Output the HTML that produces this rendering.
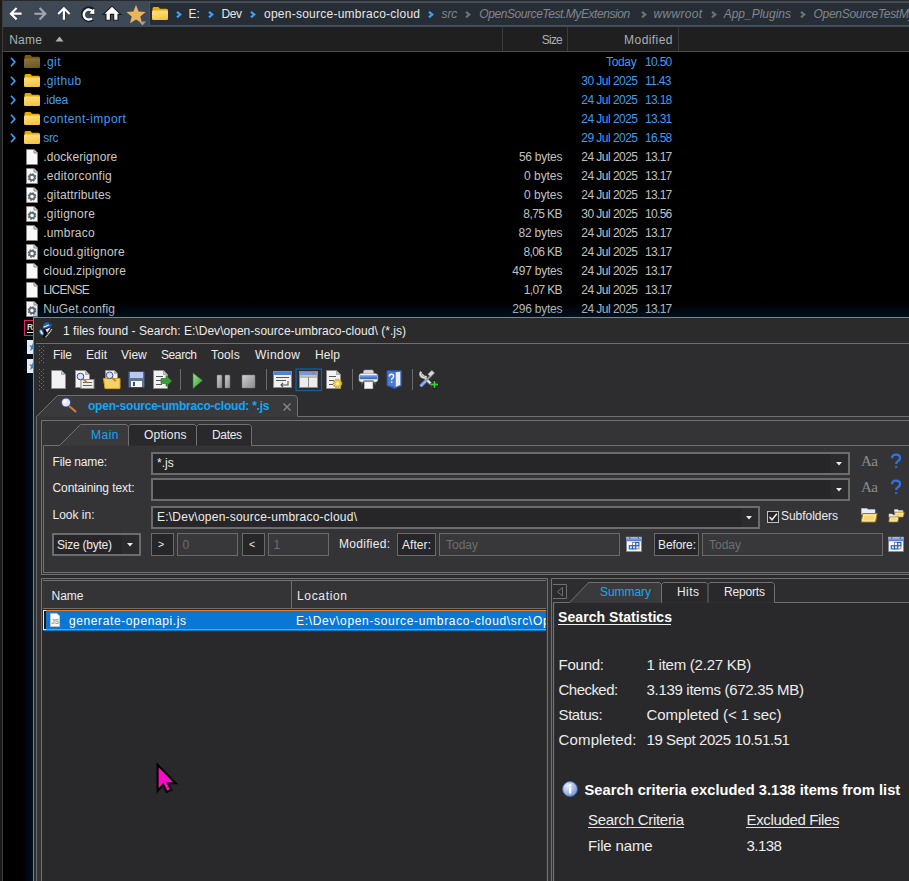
<!DOCTYPE html>
<html><head><meta charset="utf-8"><style>*{margin:0;padding:0;box-sizing:border-box}
html,body{width:909px;height:881px;overflow:hidden;background:#000}
body{position:relative;font-family:"Liberation Sans",sans-serif;font-size:12px;color:#e8e8e8}
.a{position:absolute}
.t{position:absolute;white-space:nowrap;line-height:1}
svg.a{overflow:visible}
</style></head><body>
<div class="a" style="left:0px;top:0px;width:2px;height:881px;background:#1b1b1b;"></div>
<div class="a" style="left:2px;top:0px;width:1px;height:881px;background:#3d3d3d;"></div>
<div class="a" style="left:3px;top:0px;width:906px;height:1px;background:#262a2f;"></div>
<div class="a" style="left:3px;top:1px;width:906px;height:26px;background:#3f4955;"></div>
<div class="a" style="left:149px;top:2px;width:760px;height:24px;background:#48525d;"></div>
<div class="a" style="left:150px;top:3px;width:759px;height:22px;background:#272d35;"></div>
<svg class="a" style="left:0px;top:0px;" width="80" height="27" viewBox="0 0 80 27"><path d="M21.6 13.7 H11.5 M16.6 8 L10.9 13.7 L16.6 19.4" fill="none" stroke="#1a2027" stroke-opacity="0.45" stroke-width="3.2"/><path d="M21.6 13.7 H11.5 M16.6 8 L10.9 13.7 L16.6 19.4" fill="none" stroke="#fff" stroke-width="2.2"/><path d="M34.4 13.7 H45 M39.6 8 L45.3 13.7 L39.6 19.4" fill="none" stroke="#a2a8b0" stroke-width="2.1"/><path d="M63.9 19.8 V9 M58.2 14 L63.9 8.3 L69.6 14" fill="none" stroke="#1a2027" stroke-opacity="0.45" stroke-width="3.2"/><path d="M63.9 19.8 V9 M58.2 14 L63.9 8.3 L69.6 14" fill="none" stroke="#fff" stroke-width="2.2"/></svg>
<svg class="a" style="left:78px;top:3px;" width="20" height="22" viewBox="0 0 20 22"><path d="M15.2 6.8 A6 6 0 1 0 14.6 16" fill="none" stroke="#161b22" stroke-width="4"/><path d="M11 10.6 L16.6 5 V11.2Z" fill="#fff" stroke="#161b22" stroke-width="1"/><path d="M14.8 8.6 A5 5 0 1 0 14 15.4" fill="none" stroke="#fff" stroke-width="2.5"/><path d="M11.4 10.4 L16.4 5.4 V10.9Z" fill="#fff"/></svg>
<svg class="a" style="left:102px;top:4px;" width="20" height="18" viewBox="0 0 20 18"><path d="M1.2 10.4 L10 2.2 L18.8 10.4 H16 V16.2 H11.7 V10.4 H8.4 V16.2 H4 V10.4Z" fill="#fff" stroke="#161b22" stroke-width="1.1" stroke-linejoin="miter"/></svg>
<svg class="a" style="left:125px;top:4px;" width="22" height="22" viewBox="0 0 22 22"><path d="M11 1 L13.6 7.4 L20.6 7.9 L15.3 12.4 L17 19.2 L11 15.6 L5 19.2 L6.7 12.4 L1.4 7.9 L8.4 7.4Z" fill="#e9b55c"/><path d="M14 17.5 H21 L17.5 21.5Z" fill="#9aa0a6"/></svg>
<svg class="a" style="left:152px;top:7px;" width="16" height="13" viewBox="0 0 16 13"><defs><linearGradient id="fg152_7" x1="0" y1="0" x2="0.3" y2="1"><stop offset="0" stop-color="#ffe28a"/><stop offset="1" stop-color="#f7c440"/></linearGradient></defs><path d="M0.5 1.5 Q0.5 0 2 0 H6.5 L8 1.8 H14.5 Q16 1.8 16 3.3 V5 H0.5Z" fill="#eba800"/><rect x="0" y="3.6" width="16" height="9.4" rx="1.2" fill="url(#fg152_7)"/></svg>
<svg class="a" style="left:175.7px;top:11px;" width="5.5" height="7.2" viewBox="0 0 5.5 7.2"><path d="M1 0.8 L4.3 3.6 L1 6.4" fill="none" stroke="#3a9ff5" stroke-width="2.2"/></svg>
<div class="t" style="left:188.5px;top:7.84px;font-size:12.0px;color:#e6e6e6;">E:</div>
<svg class="a" style="left:207.7px;top:11px;" width="5.5" height="7.2" viewBox="0 0 5.5 7.2"><path d="M1 0.8 L4.3 3.6 L1 6.4" fill="none" stroke="#3a9ff5" stroke-width="2.2"/></svg>
<div class="t" style="left:221.5px;top:7.84px;font-size:12.0px;color:#e6e6e6;letter-spacing:-0.420px;">Dev</div>
<svg class="a" style="left:249.7px;top:11px;" width="5.5" height="7.2" viewBox="0 0 5.5 7.2"><path d="M1 0.8 L4.3 3.6 L1 6.4" fill="none" stroke="#3a9ff5" stroke-width="2.2"/></svg>
<div class="t" style="left:264px;top:7.84px;font-size:12.0px;color:#e6e6e6;letter-spacing:0.247px;">open-source-umbraco-cloud</div>
<svg class="a" style="left:428.2px;top:11px;" width="5.5" height="7.2" viewBox="0 0 5.5 7.2"><path d="M1 0.8 L4.3 3.6 L1 6.4" fill="none" stroke="#3a9ff5" stroke-width="2.2"/></svg>
<div class="t" style="left:441.5px;top:7.84px;font-size:12.0px;color:#80868e;font-style:italic;letter-spacing:-0.098px;">src</div>
<svg class="a" style="left:465.2px;top:11px;" width="5.5" height="7.2" viewBox="0 0 5.5 7.2"><path d="M1 0.8 L4.3 3.6 L1 6.4" fill="none" stroke="#6a7078" stroke-width="2.2"/></svg>
<div class="t" style="left:479.3px;top:7.84px;font-size:12.0px;color:#80868e;font-style:italic;letter-spacing:-0.430px;">OpenSourceTest.MyExtension</div>
<svg class="a" style="left:640.7px;top:11px;" width="5.5" height="7.2" viewBox="0 0 5.5 7.2"><path d="M1 0.8 L4.3 3.6 L1 6.4" fill="none" stroke="#6a7078" stroke-width="2.2"/></svg>
<div class="t" style="left:653.5px;top:7.84px;font-size:12.0px;color:#80868e;font-style:italic;letter-spacing:0.304px;">wwwroot</div>
<svg class="a" style="left:710.7px;top:11px;" width="5.5" height="7.2" viewBox="0 0 5.5 7.2"><path d="M1 0.8 L4.3 3.6 L1 6.4" fill="none" stroke="#6a7078" stroke-width="2.2"/></svg>
<div class="t" style="left:723.7px;top:7.84px;font-size:12.0px;color:#80868e;font-style:italic;letter-spacing:-0.008px;">App_Plugins</div>
<svg class="a" style="left:799.7px;top:11px;" width="5.5" height="7.2" viewBox="0 0 5.5 7.2"><path d="M1 0.8 L4.3 3.6 L1 6.4" fill="none" stroke="#6a7078" stroke-width="2.2"/></svg>
<div class="t" style="left:813.6px;top:7.84px;font-size:12.0px;color:#80868e;font-style:italic;letter-spacing:-0.309px;">OpenSourceTestMyExtension</div>
<div class="a" style="left:3px;top:27px;width:906px;height:24px;background:#1f1f1f;"></div>
<div class="a" style="left:3px;top:51px;width:906px;height:1px;background:#4b4b4b;"></div>
<div class="a" style="left:502px;top:27px;width:1px;height:24px;background:#3b3b3b;"></div>
<div class="a" style="left:567px;top:27px;width:1px;height:24px;background:#3b3b3b;"></div>
<div class="a" style="left:678px;top:27px;width:1px;height:24px;background:#3b3b3b;"></div>
<div class="t" style="left:9.2px;top:33.84px;font-size:12.0px;color:#a9afb6;letter-spacing:0.263px;">Name</div>
<svg class="a" style="left:55px;top:36px;" width="9" height="6" viewBox="0 0 9 6"><path d="M0.5 5.5 L4.5 0.5 L8.5 5.5Z" fill="#b0b0b0"/></svg>
<div class="t" style="left:541.8562499999999px;top:33.84px;font-size:12.0px;color:#a9afb6;letter-spacing:-0.800px;">Size</div>
<div class="t" style="left:624.1px;top:33.84px;font-size:12.0px;color:#a9afb6;letter-spacing:0.435px;">Modified</div>
<svg class="a" style="left:10px;top:57px;" width="6" height="10" viewBox="0 0 6 10"><path d="M1 0.8 L4.8 5.0 L1 9.2" fill="none" stroke="#3a9ff5" stroke-width="1.7"/></svg>
<svg class="a" style="left:24px;top:55px;" width="16" height="13" viewBox="0 0 16 13"><defs><linearGradient id="fg24_55" x1="0" y1="0" x2="0.3" y2="1"><stop offset="0" stop-color="#8a7440"/><stop offset="1" stop-color="#6e5a2a"/></linearGradient></defs><path d="M0.5 1.5 Q0.5 0 2 0 H6.5 L8 1.8 H14.5 Q16 1.8 16 3.3 V5 H0.5Z" fill="#7d5a08"/><rect x="0" y="3.6" width="16" height="9.4" rx="1.2" fill="url(#fg24_55)"/></svg>
<div class="t" style="left:43.2px;top:55.84px;font-size:12.0px;color:#3d9cf3;letter-spacing:0.431px;">.git</div>
<div class="t" style="left:606.0px;top:55.84px;font-size:12.0px;color:#3d9cf3;letter-spacing:-0.338px;">Today</div>
<div class="t" style="left:645.0999999999999px;top:55.84px;font-size:12.0px;color:#3d9cf3;letter-spacing:-0.707px;">10.50</div>
<svg class="a" style="left:10px;top:76px;" width="6" height="10" viewBox="0 0 6 10"><path d="M1 0.8 L4.8 5.0 L1 9.2" fill="none" stroke="#3a9ff5" stroke-width="1.7"/></svg>
<svg class="a" style="left:24px;top:74px;" width="16" height="13" viewBox="0 0 16 13"><defs><linearGradient id="fg24_74" x1="0" y1="0" x2="0.3" y2="1"><stop offset="0" stop-color="#ffe28a"/><stop offset="1" stop-color="#f7c440"/></linearGradient></defs><path d="M0.5 1.5 Q0.5 0 2 0 H6.5 L8 1.8 H14.5 Q16 1.8 16 3.3 V5 H0.5Z" fill="#eba800"/><rect x="0" y="3.6" width="16" height="9.4" rx="1.2" fill="url(#fg24_74)"/></svg>
<div class="t" style="left:43.2px;top:74.84px;font-size:12.0px;color:#3d9cf3;letter-spacing:0.328px;">.github</div>
<div class="t" style="left:581.3px;top:74.84px;font-size:12.0px;color:#3d9cf3;letter-spacing:-0.535px;">30 Jul 2025</div>
<div class="t" style="left:645.0999999999999px;top:74.84px;font-size:12.0px;color:#3d9cf3;letter-spacing:-0.707px;">11.43</div>
<svg class="a" style="left:10px;top:95px;" width="6" height="10" viewBox="0 0 6 10"><path d="M1 0.8 L4.8 5.0 L1 9.2" fill="none" stroke="#3a9ff5" stroke-width="1.7"/></svg>
<svg class="a" style="left:24px;top:93px;" width="16" height="13" viewBox="0 0 16 13"><defs><linearGradient id="fg24_93" x1="0" y1="0" x2="0.3" y2="1"><stop offset="0" stop-color="#ffe28a"/><stop offset="1" stop-color="#f7c440"/></linearGradient></defs><path d="M0.5 1.5 Q0.5 0 2 0 H6.5 L8 1.8 H14.5 Q16 1.8 16 3.3 V5 H0.5Z" fill="#eba800"/><rect x="0" y="3.6" width="16" height="9.4" rx="1.2" fill="url(#fg24_93)"/></svg>
<div class="t" style="left:43.2px;top:93.84px;font-size:12.0px;color:#3d9cf3;letter-spacing:-0.255px;">.idea</div>
<div class="t" style="left:581.3px;top:93.84px;font-size:12.0px;color:#3d9cf3;letter-spacing:-0.535px;">24 Jul 2025</div>
<div class="t" style="left:645.0999999999999px;top:93.84px;font-size:12.0px;color:#3d9cf3;letter-spacing:-0.707px;">13.18</div>
<svg class="a" style="left:10px;top:114px;" width="6" height="10" viewBox="0 0 6 10"><path d="M1 0.8 L4.8 5.0 L1 9.2" fill="none" stroke="#3a9ff5" stroke-width="1.7"/></svg>
<svg class="a" style="left:24px;top:112px;" width="16" height="13" viewBox="0 0 16 13"><defs><linearGradient id="fg24_112" x1="0" y1="0" x2="0.3" y2="1"><stop offset="0" stop-color="#ffe28a"/><stop offset="1" stop-color="#f7c440"/></linearGradient></defs><path d="M0.5 1.5 Q0.5 0 2 0 H6.5 L8 1.8 H14.5 Q16 1.8 16 3.3 V5 H0.5Z" fill="#eba800"/><rect x="0" y="3.6" width="16" height="9.4" rx="1.2" fill="url(#fg24_112)"/></svg>
<div class="t" style="left:43.2px;top:112.84px;font-size:12.0px;color:#3d9cf3;letter-spacing:0.454px;">content-import</div>
<div class="t" style="left:581.3px;top:112.84px;font-size:12.0px;color:#3d9cf3;letter-spacing:-0.535px;">24 Jul 2025</div>
<div class="t" style="left:645.0999999999999px;top:112.84px;font-size:12.0px;color:#3d9cf3;letter-spacing:-0.707px;">13.31</div>
<svg class="a" style="left:10px;top:133px;" width="6" height="10" viewBox="0 0 6 10"><path d="M1 0.8 L4.8 5.0 L1 9.2" fill="none" stroke="#3a9ff5" stroke-width="1.7"/></svg>
<svg class="a" style="left:24px;top:131px;" width="16" height="13" viewBox="0 0 16 13"><defs><linearGradient id="fg24_131" x1="0" y1="0" x2="0.3" y2="1"><stop offset="0" stop-color="#ffe28a"/><stop offset="1" stop-color="#f7c440"/></linearGradient></defs><path d="M0.5 1.5 Q0.5 0 2 0 H6.5 L8 1.8 H14.5 Q16 1.8 16 3.3 V5 H0.5Z" fill="#eba800"/><rect x="0" y="3.6" width="16" height="9.4" rx="1.2" fill="url(#fg24_131)"/></svg>
<div class="t" style="left:43.2px;top:131.84px;font-size:12.0px;color:#3d9cf3;letter-spacing:-0.298px;">src</div>
<div class="t" style="left:581.3px;top:131.84px;font-size:12.0px;color:#3d9cf3;letter-spacing:-0.535px;">29 Jul 2025</div>
<div class="t" style="left:645.0999999999999px;top:131.84px;font-size:12.0px;color:#3d9cf3;letter-spacing:-0.707px;">16.58</div>
<svg class="a" style="left:26px;top:149px;" width="12" height="16" viewBox="0 0 12 16"><path d="M0.5 0.5 H8 L11.5 4 V15.5 H0.5Z" fill="#f8f8f8" stroke="#8a8580" stroke-width="1"/><path d="M8 0.5 V4 H11.5" fill="#e0e0e0" stroke="#8a8580" stroke-width="1"/></svg>
<div class="t" style="left:43.2px;top:150.84px;font-size:12.0px;color:#c8c8c8;letter-spacing:0.108px;">.dockerignore</div>
<div class="t" style="left:518.9px;top:150.84px;font-size:12.0px;color:#c0c0c0;letter-spacing:-0.252px;">56 bytes</div>
<div class="t" style="left:581.3px;top:150.84px;font-size:12.0px;color:#c0c0c0;letter-spacing:-0.535px;">24 Jul 2025</div>
<div class="t" style="left:645.0999999999999px;top:150.84px;font-size:12.0px;color:#c0c0c0;letter-spacing:-0.707px;">13.17</div>
<svg class="a" style="left:26px;top:168px;" width="12" height="16" viewBox="0 0 12 16"><path d="M0.5 0.5 H8 L11.5 4 V15.5 H0.5Z" fill="#f8f8f8" stroke="#8a8580" stroke-width="1"/><path d="M8 0.5 V4 H11.5" fill="#e0e0e0" stroke="#8a8580" stroke-width="1"/><g transform="translate(6,9.5)"><circle r="3.2" fill="none" stroke="#5f6d75" stroke-width="2.2" stroke-dasharray="1.6 0.9"/><circle r="2.6" fill="none" stroke="#5f6d75" stroke-width="1.6"/></g></svg>
<div class="t" style="left:43.2px;top:169.84px;font-size:12.0px;color:#c8c8c8;letter-spacing:0.269px;">.editorconfig</div>
<div class="t" style="left:524.1px;top:169.84px;font-size:12.0px;color:#c0c0c0;letter-spacing:-0.048px;">0 bytes</div>
<div class="t" style="left:581.3px;top:169.84px;font-size:12.0px;color:#c0c0c0;letter-spacing:-0.535px;">24 Jul 2025</div>
<div class="t" style="left:645.0999999999999px;top:169.84px;font-size:12.0px;color:#c0c0c0;letter-spacing:-0.707px;">13.17</div>
<svg class="a" style="left:26px;top:187px;" width="12" height="16" viewBox="0 0 12 16"><path d="M0.5 0.5 H8 L11.5 4 V15.5 H0.5Z" fill="#f8f8f8" stroke="#8a8580" stroke-width="1"/><path d="M8 0.5 V4 H11.5" fill="#e0e0e0" stroke="#8a8580" stroke-width="1"/><g transform="translate(6,9.5)"><circle r="3.2" fill="none" stroke="#5f6d75" stroke-width="2.2" stroke-dasharray="1.6 0.9"/><circle r="2.6" fill="none" stroke="#5f6d75" stroke-width="1.6"/></g></svg>
<div class="t" style="left:43.2px;top:188.84px;font-size:12.0px;color:#c8c8c8;letter-spacing:0.172px;">.gitattributes</div>
<div class="t" style="left:524.1px;top:188.84px;font-size:12.0px;color:#c0c0c0;letter-spacing:-0.048px;">0 bytes</div>
<div class="t" style="left:581.3px;top:188.84px;font-size:12.0px;color:#c0c0c0;letter-spacing:-0.535px;">24 Jul 2025</div>
<div class="t" style="left:645.0999999999999px;top:188.84px;font-size:12.0px;color:#c0c0c0;letter-spacing:-0.707px;">13.17</div>
<svg class="a" style="left:26px;top:206px;" width="12" height="16" viewBox="0 0 12 16"><path d="M0.5 0.5 H8 L11.5 4 V15.5 H0.5Z" fill="#f8f8f8" stroke="#8a8580" stroke-width="1"/><path d="M8 0.5 V4 H11.5" fill="#e0e0e0" stroke="#8a8580" stroke-width="1"/><g transform="translate(6,9.5)"><circle r="3.2" fill="none" stroke="#5f6d75" stroke-width="2.2" stroke-dasharray="1.6 0.9"/><circle r="2.6" fill="none" stroke="#5f6d75" stroke-width="1.6"/></g></svg>
<div class="t" style="left:43.2px;top:207.84px;font-size:12.0px;color:#c8c8c8;letter-spacing:0.259px;">.gitignore</div>
<div class="t" style="left:523.3px;top:207.84px;font-size:12.0px;color:#c0c0c0;letter-spacing:-0.583px;">8,75 KB</div>
<div class="t" style="left:581.3px;top:207.84px;font-size:12.0px;color:#c0c0c0;letter-spacing:-0.535px;">30 Jul 2025</div>
<div class="t" style="left:645.0999999999999px;top:207.84px;font-size:12.0px;color:#c0c0c0;letter-spacing:-0.707px;">10.56</div>
<svg class="a" style="left:26px;top:225px;" width="12" height="16" viewBox="0 0 12 16"><path d="M0.5 0.5 H8 L11.5 4 V15.5 H0.5Z" fill="#f8f8f8" stroke="#8a8580" stroke-width="1"/><path d="M8 0.5 V4 H11.5" fill="#e0e0e0" stroke="#8a8580" stroke-width="1"/></svg>
<div class="t" style="left:43.2px;top:226.84px;font-size:12.0px;color:#c8c8c8;letter-spacing:0.197px;">.umbraco</div>
<div class="t" style="left:518.5px;top:226.84px;font-size:12.0px;color:#c0c0c0;letter-spacing:-0.195px;">82 bytes</div>
<div class="t" style="left:581.3px;top:226.84px;font-size:12.0px;color:#c0c0c0;letter-spacing:-0.535px;">24 Jul 2025</div>
<div class="t" style="left:645.0999999999999px;top:226.84px;font-size:12.0px;color:#c0c0c0;letter-spacing:-0.707px;">13.17</div>
<svg class="a" style="left:26px;top:244px;" width="12" height="16" viewBox="0 0 12 16"><path d="M0.5 0.5 H8 L11.5 4 V15.5 H0.5Z" fill="#f8f8f8" stroke="#8a8580" stroke-width="1"/><path d="M8 0.5 V4 H11.5" fill="#e0e0e0" stroke="#8a8580" stroke-width="1"/><g transform="translate(6,9.5)"><circle r="3.2" fill="none" stroke="#5f6d75" stroke-width="2.2" stroke-dasharray="1.6 0.9"/><circle r="2.6" fill="none" stroke="#5f6d75" stroke-width="1.6"/></g></svg>
<div class="t" style="left:43.2px;top:245.84px;font-size:12.0px;color:#c8c8c8;letter-spacing:0.253px;">cloud.gitignore</div>
<div class="t" style="left:523.5px;top:245.84px;font-size:12.0px;color:#c0c0c0;letter-spacing:-0.616px;">8,06 KB</div>
<div class="t" style="left:581.3px;top:245.84px;font-size:12.0px;color:#c0c0c0;letter-spacing:-0.535px;">24 Jul 2025</div>
<div class="t" style="left:645.0999999999999px;top:245.84px;font-size:12.0px;color:#c0c0c0;letter-spacing:-0.707px;">13.17</div>
<svg class="a" style="left:26px;top:263px;" width="12" height="16" viewBox="0 0 12 16"><path d="M0.5 0.5 H8 L11.5 4 V15.5 H0.5Z" fill="#f8f8f8" stroke="#8a8580" stroke-width="1"/><path d="M8 0.5 V4 H11.5" fill="#e0e0e0" stroke="#8a8580" stroke-width="1"/></svg>
<div class="t" style="left:43.2px;top:264.84px;font-size:12.0px;color:#c8c8c8;letter-spacing:0.142px;">cloud.zipignore</div>
<div class="t" style="left:512.3px;top:264.84px;font-size:12.0px;color:#c0c0c0;letter-spacing:-0.230px;">497 bytes</div>
<div class="t" style="left:581.3px;top:264.84px;font-size:12.0px;color:#c0c0c0;letter-spacing:-0.535px;">24 Jul 2025</div>
<div class="t" style="left:645.0999999999999px;top:264.84px;font-size:12.0px;color:#c0c0c0;letter-spacing:-0.707px;">13.17</div>
<svg class="a" style="left:26px;top:282px;" width="12" height="16" viewBox="0 0 12 16"><path d="M0.5 0.5 H8 L11.5 4 V15.5 H0.5Z" fill="#f8f8f8" stroke="#8a8580" stroke-width="1"/><path d="M8 0.5 V4 H11.5" fill="#e0e0e0" stroke="#8a8580" stroke-width="1"/></svg>
<div class="t" style="left:43.2px;top:283.84px;font-size:12.0px;color:#c8c8c8;letter-spacing:-0.800px;">LICENSE</div>
<div class="t" style="left:523.7px;top:283.84px;font-size:12.0px;color:#c0c0c0;letter-spacing:-0.650px;">1,07 KB</div>
<div class="t" style="left:581.3px;top:283.84px;font-size:12.0px;color:#c0c0c0;letter-spacing:-0.535px;">24 Jul 2025</div>
<div class="t" style="left:645.0999999999999px;top:283.84px;font-size:12.0px;color:#c0c0c0;letter-spacing:-0.707px;">13.17</div>
<svg class="a" style="left:26px;top:301px;" width="12" height="16" viewBox="0 0 12 16"><path d="M0.5 0.5 H8 L11.5 4 V15.5 H0.5Z" fill="#f8f8f8" stroke="#8a8580" stroke-width="1"/><path d="M8 0.5 V4 H11.5" fill="#e0e0e0" stroke="#8a8580" stroke-width="1"/><g transform="translate(6,9.5)"><circle r="3.2" fill="none" stroke="#5f6d75" stroke-width="2.2" stroke-dasharray="1.6 0.9"/><circle r="2.6" fill="none" stroke="#5f6d75" stroke-width="1.6"/></g></svg>
<div class="t" style="left:43.2px;top:302.84px;font-size:12.0px;color:#c8c8c8;letter-spacing:0.160px;">NuGet.config</div>
<div class="t" style="left:512.3px;top:302.84px;font-size:12.0px;color:#c0c0c0;letter-spacing:-0.230px;">296 bytes</div>
<div class="t" style="left:581.3px;top:302.84px;font-size:12.0px;color:#c0c0c0;letter-spacing:-0.535px;">24 Jul 2025</div>
<div class="t" style="left:645.0999999999999px;top:302.84px;font-size:12.0px;color:#c0c0c0;letter-spacing:-0.707px;">13.17</div>
<div class="a" style="left:33px;top:303px;width:876px;height:14px;background:linear-gradient(to bottom, rgba(0,40,80,0), rgba(0,60,110,0.28));"></div>
<div class="a" style="left:22px;top:317px;width:11px;height:564px;background:linear-gradient(to right, rgba(0,40,80,0), rgba(0,60,110,0.28));"></div>
<div class="a" style="left:33px;top:317px;width:876px;height:564px;background:#2d2d30;"></div>
<div class="a" style="left:33px;top:317px;width:876px;height:1px;background:#1aa2f2;"></div>
<div class="a" style="left:33px;top:317px;width:1px;height:564px;background:#1aa2f2;"></div>
<div class="a" style="left:34px;top:318px;width:875px;height:25px;background:#2b2b2c;"></div>
<svg class="a" style="left:36px;top:320px;" width="20" height="20" viewBox="0 0 20 20"><path d="M6.8 8.4 L7.6 4.2 L10.4 2 L12.6 2.4 L13.6 4 L16.2 4.2 L15.2 6.2 L9 8.6Z" fill="#1d64b4"/><path d="M7.4 7.2 L12.8 5" stroke="#f0f6ff" stroke-width="1.1"/><path d="M8.2 9.2 L12.6 7.6 L11.6 12 L9.2 17.6 L6.6 17.8 L7.4 12Z" fill="#0c0c0c"/><path d="M9.4 9.6 L14.6 7.4 L11.2 12.4Z" fill="#f4f4f4"/><path d="M9.6 17.2 L16 9.4" stroke="#f0f0f0" stroke-width="1.2" stroke-dasharray="1.2 0.6"/><ellipse cx="5.5" cy="12.4" rx="1.4" ry="2.8" fill="#e8f4ff" stroke="#2a70c0" stroke-width="0.9" transform="rotate(-25 5.4 12.4)"/></svg>
<div class="t" style="left:63px;top:324.84px;font-size:12.0px;color:#ececec;letter-spacing:0.035px;">1 files found - Search: E:\Dev\open-source-umbraco-cloud\ (*.js)</div>
<div class="a" style="left:36px;top:343px;width:873px;height:1px;background:#6e6e6e;"></div>
<div class="a" style="left:39px;top:346px;width:1px;height:1px;background:#707070;"></div>
<div class="a" style="left:43px;top:346px;width:1px;height:1px;background:#707070;"></div>
<div class="a" style="left:41px;top:348px;width:1px;height:1px;background:#707070;"></div>
<div class="a" style="left:39px;top:350px;width:1px;height:1px;background:#707070;"></div>
<div class="a" style="left:43px;top:350px;width:1px;height:1px;background:#707070;"></div>
<div class="a" style="left:41px;top:352px;width:1px;height:1px;background:#707070;"></div>
<div class="a" style="left:39px;top:354px;width:1px;height:1px;background:#707070;"></div>
<div class="a" style="left:43px;top:354px;width:1px;height:1px;background:#707070;"></div>
<div class="a" style="left:41px;top:356px;width:1px;height:1px;background:#707070;"></div>
<div class="a" style="left:39px;top:358px;width:1px;height:1px;background:#707070;"></div>
<div class="a" style="left:43px;top:358px;width:1px;height:1px;background:#707070;"></div>
<div class="a" style="left:41px;top:360px;width:1px;height:1px;background:#707070;"></div>
<div class="a" style="left:39px;top:362px;width:1px;height:1px;background:#707070;"></div>
<div class="a" style="left:43px;top:362px;width:1px;height:1px;background:#707070;"></div>
<div class="a" style="left:39px;top:369px;width:1px;height:1px;background:#707070;"></div>
<div class="a" style="left:43px;top:369px;width:1px;height:1px;background:#707070;"></div>
<div class="a" style="left:41px;top:371px;width:1px;height:1px;background:#707070;"></div>
<div class="a" style="left:39px;top:373px;width:1px;height:1px;background:#707070;"></div>
<div class="a" style="left:43px;top:373px;width:1px;height:1px;background:#707070;"></div>
<div class="a" style="left:41px;top:375px;width:1px;height:1px;background:#707070;"></div>
<div class="a" style="left:39px;top:377px;width:1px;height:1px;background:#707070;"></div>
<div class="a" style="left:43px;top:377px;width:1px;height:1px;background:#707070;"></div>
<div class="a" style="left:41px;top:379px;width:1px;height:1px;background:#707070;"></div>
<div class="a" style="left:39px;top:381px;width:1px;height:1px;background:#707070;"></div>
<div class="a" style="left:43px;top:381px;width:1px;height:1px;background:#707070;"></div>
<div class="a" style="left:41px;top:383px;width:1px;height:1px;background:#707070;"></div>
<div class="a" style="left:39px;top:385px;width:1px;height:1px;background:#707070;"></div>
<div class="a" style="left:43px;top:385px;width:1px;height:1px;background:#707070;"></div>
<div class="a" style="left:41px;top:387px;width:1px;height:1px;background:#707070;"></div>
<div class="a" style="left:39px;top:389px;width:1px;height:1px;background:#707070;"></div>
<div class="a" style="left:43px;top:389px;width:1px;height:1px;background:#707070;"></div>
<div class="t" style="left:53px;top:348.84px;font-size:12.0px;color:#ececec;letter-spacing:-0.112px;">File</div>
<div class="t" style="left:86px;top:348.84px;font-size:12.0px;color:#ececec;letter-spacing:0.107px;">Edit</div>
<div class="t" style="left:121px;top:348.84px;font-size:12.0px;color:#ececec;letter-spacing:-0.003px;">View</div>
<div class="t" style="left:161px;top:348.84px;font-size:12.0px;color:#ececec;letter-spacing:-0.404px;">Search</div>
<div class="t" style="left:211px;top:348.84px;font-size:12.0px;color:#ececec;letter-spacing:0.164px;">Tools</div>
<div class="t" style="left:255px;top:348.84px;font-size:12.0px;color:#ececec;letter-spacing:0.464px;">Window</div>
<div class="t" style="left:315px;top:348.84px;font-size:12.0px;color:#ececec;letter-spacing:0.107px;">Help</div>
<svg class="a" style="left:0px;top:0px;left:0;top:0" width="909" height="881" viewBox="0 0 909 881"><path d="M51.5 370.5 H61.5 L65.5 374.5 V388.5 H51.5Z" fill="#f2f2f2" stroke="#8c8c8c"/><path d="M61.5 370.5 V374.5 H65.5Z" fill="#b9c2cc" stroke="#8c8c8c" stroke-width="0.6"/><path d="M75.5 370.5 H85.5 L89.5 374.5 V387.5 H75.5Z" fill="#f2f2f2" stroke="#8c8c8c"/><path d="M85.5 370.5 V374.5 H89.5Z" fill="#b9c2cc" stroke="#8c8c8c" stroke-width="0.6"/><rect x="81" y="379.5" width="13" height="9" fill="#eeeeee" stroke="#8c8c8c"/><path d="M83 382.5 H92 M83 385.5 H92" stroke="#666" stroke-width="1"/><path d="M82.48 378.48 L86.77 382.44" stroke="#d9792a" stroke-width="1.8"/><circle cx="80.5" cy="376.5" r="3.3" fill="#d8e2f8" stroke="#3b4f9a" stroke-width="1"/><path d="M105.5 370.5 H114.5 L117.5 373.5 V380.5 H105.5Z" fill="#f2f2f2" stroke="#8c8c8c"/><path d="M114.5 370.5 V373.5 H117.5Z" fill="#b9c2cc" stroke="#8c8c8c" stroke-width="0.6"/><path d="M103.5 378.5 H120 V388.5 H105Z" fill="#f2d36b" stroke="#d9a514"/><path d="M111.58 377.28000000000003 L115.86999999999999 381.24" stroke="#d9792a" stroke-width="1.8"/><circle cx="109.6" cy="375.3" r="3.3" fill="#d8e2f8" stroke="#3b4f9a" stroke-width="1"/><rect x="128.5" y="371.5" width="16" height="16" rx="1" fill="#5f7394" stroke="#3c4b66"/><rect x="130" y="372" width="13" height="6" fill="#b8c8f0"/><rect x="131" y="381" width="11" height="6" fill="#f5f5f5"/><rect x="133" y="382" width="2" height="4" fill="#3c4b66"/><path d="M153.5 370.5 H163.5 L167.5 374.5 V388.5 H153.5Z" fill="#f2f2f2" stroke="#8c8c8c"/><path d="M163.5 370.5 V374.5 H167.5Z" fill="#b9c2cc" stroke="#8c8c8c" stroke-width="0.6"/><path d="M156 376.5 H163 M156 380.5 H162 M156 384.5 H162" stroke="#555" stroke-width="1"/><path d="M161 378.5 H166 V375.5 L172 381 L166 386.5 V383.5 H161Z" fill="#3d9a3d" stroke="#246a24" stroke-width="0.6"/><rect x="180" y="369" width="1" height="21" fill="#6a6a6a"/><rect x="266" y="369" width="1" height="21" fill="#6a6a6a"/><rect x="352" y="369" width="1" height="21" fill="#6a6a6a"/><rect x="412" y="369" width="1" height="21" fill="#6a6a6a"/><defs><linearGradient id="pg" x1="0" y1="0" x2="1" y2="1"><stop offset="0" stop-color="#a8e0a0"/><stop offset="1" stop-color="#2a9a2a"/></linearGradient><linearGradient id="gg" x1="0" y1="0" x2="1" y2="1"><stop offset="0" stop-color="#d0d0d0"/><stop offset="1" stop-color="#8a8a8a"/></linearGradient></defs><path d="M193 373 L202.5 380.5 L193 388.5Z" fill="url(#pg)" stroke="#2d7d2d" stroke-width="0.6"/><rect x="217" y="375" width="5" height="13" rx="0.8" fill="url(#gg)" stroke="#7a7a7a" stroke-width="0.5"/><rect x="225" y="375" width="5" height="13" rx="0.8" fill="url(#gg)" stroke="#7a7a7a" stroke-width="0.5"/><rect x="242" y="375" width="13" height="13" rx="0.8" fill="url(#gg)" stroke="#7a7a7a" stroke-width="0.5"/><rect x="273.5" y="371.5" width="18" height="16" fill="#f0f0f0" stroke="#8a8a8a"/><rect x="274" y="372" width="17" height="3" fill="#4f7fd6"/><path d="M276 377.5 H289 M276 380.5 H286" stroke="#555" stroke-width="1"/><path d="M288 381 V385 H281 M283 383 L281 385 L283 387" fill="none" stroke="#555" stroke-width="1.1"/><rect x="296" y="369" width="25.5" height="21.5" fill="none" stroke="#0e63a8" stroke-width="1.2"/><rect x="299.5" y="371.5" width="18" height="16" fill="#ececec" stroke="#8a8a8a"/><rect x="300" y="372" width="17" height="3.5" fill="#7a9ad6"/><rect x="312" y="372.5" width="3" height="1.5" fill="#e86a2a"/><path d="M300 377 H317 M308.5 377 V387" stroke="#8a8a8a" stroke-width="1"/><path d="M326.5 370.5 H336.5 L340.5 374.5 V388.5 H326.5Z" fill="#f2f2f2" stroke="#8c8c8c"/><path d="M336.5 370.5 V374.5 H340.5Z" fill="#b9c2cc" stroke="#8c8c8c" stroke-width="0.6"/><path d="M329 376.5 H336 M329 380.5 H334 M329 384.5 H333" stroke="#555" stroke-width="1"/><circle cx="337.5" cy="383.5" r="4" fill="#f2d04a" stroke="#c99a14" stroke-width="1.6" stroke-dasharray="1.4 0.9"/><circle cx="337.5" cy="383.5" r="1.6" fill="#f7f0d0"/><defs><linearGradient id="prb" x1="0" y1="0" x2="0" y2="1"><stop offset="0" stop-color="#9cbaf0"/><stop offset="0.5" stop-color="#4f80dc"/><stop offset="1" stop-color="#3a64c0"/></linearGradient></defs><rect x="363.5" y="370" width="10" height="4.5" rx="1.5" fill="#d8d8d8" stroke="#aaa" stroke-width="0.5"/><path d="M361.5 373.5 H375.5 Q377.8 373.5 377.8 376 V380 Q377.8 382 375.5 382 H361.5 Q359 382 359 380 V376 Q359 373.5 361.5 373.5Z" fill="#f2f2f2" stroke="#9a9a9a" stroke-width="0.6"/><rect x="359.6" y="375" width="17.6" height="4.2" fill="url(#prb)"/><rect x="363.5" y="380.6" width="10" height="1.2" fill="#222"/><path d="M362.5 382 L361.5 384.5 M374.5 382 L375.5 384.5" stroke="#888" stroke-width="0.8"/><rect x="364.3" y="381.8" width="8.6" height="7" fill="#f8f8f8" stroke="#b0b0b0" stroke-width="0.5"/><path d="M386.9 370.6 H401.6 V385.8 L394.6 388.8 L386.9 385.6Z" fill="#3566c4" stroke="#2a50a0" stroke-width="0.7"/><path d="M395.5 372.2 L400.3 371.8 V385 L395.5 387Z" fill="#ececec"/><path d="M387.8 371.2 L395.5 372.2 V387 L387.8 385Z" fill="#4a7ad2"/><path d="M389.3 376.4 Q389.3 374.2 391.5 374.2 Q393.6 374.2 393.6 376.2 Q393.6 377.4 392.4 378.1 Q391.6 378.6 391.6 380" fill="none" stroke="#f0f4ff" stroke-width="1.4"/><rect x="390.9" y="381.3" width="1.5" height="1.5" fill="#f0f4ff"/><path d="M421.5 374.5 L432.5 385.5" stroke="#8a8a8a" stroke-width="3"/><path d="M421.5 374.5 L432.5 385.5" stroke="#e4e4e4" stroke-width="1.8"/><path d="M421.2 371.8 A3.4 3.4 0 1 0 426.4 376.2" fill="none" stroke="#8a8a8a" stroke-width="2.8"/><path d="M421.2 371.8 A3.4 3.4 0 1 0 426.4 376.2" fill="none" stroke="#e0e0e0" stroke-width="1.7"/><path d="M431 375.5 L423.5 383" stroke="#9a9a9a" stroke-width="2"/><path d="M426 380.8 L420.5 386.3" stroke="#5a7ab8" stroke-width="3.6"/><path d="M426 380.8 L420.5 386.3" stroke="#8fb2ee" stroke-width="2.2"/><path d="M427.8 374.2 L431.8 370.4 L434.6 373 L430.6 376.8Z" fill="#d8d8d8" stroke="#888" stroke-width="0.7"/><path d="M434.5 380.5 V388.5 M430.5 384.5 H438.5" stroke="#111" stroke-width="3"/><path d="M434.5 381 V388 M431 384.5 H438" stroke="#2fd42f" stroke-width="1.8"/></svg>
<div class="a" style="left:36px;top:416px;width:873px;height:465px;background:#343437;"></div>
<svg class="a" style="left:0px;top:0px;left:0;top:0" width="909" height="881" viewBox="0 0 909 881"><path d="M36.5 416.5 L57.5 395.5 H294 Q297.5 395.5 297.5 399 V416.5Z" fill="#3a3a3d"/><path d="M36.5 881 V416.5 L57.5 395.5 H294 Q297.5 395.5 297.5 399 V416.5 H909" fill="none" stroke="#707070" stroke-width="1"/></svg>
<svg class="a" style="left:60px;top:397px;" width="18" height="16" viewBox="0 0 18 16"><path d="M8 8 L15.5 14.5" stroke="#d67a2e" stroke-width="2.2" stroke-linecap="round"/><circle cx="6" cy="5.5" r="4.6" fill="#dfe6f8" stroke="#2e3f80" stroke-width="1"/><circle cx="5" cy="4.5" r="2" fill="#ffffff" opacity="0.7"/></svg>
<div class="t" style="left:88px;top:399.84px;font-size:12.0px;color:#16a6f5;font-weight:700;letter-spacing:-0.217px;">open-source-umbraco-cloud: *.js</div>
<svg class="a" style="left:283px;top:403px;" width="8" height="8" viewBox="0 0 8 8"><path d="M0.5 0.5 L7.5 7.5 M7.5 0.5 L0.5 7.5" stroke="#8a8a8a" stroke-width="1.3"/></svg>
<svg class="a" style="left:0px;top:0px;left:0;top:0" width="909" height="881" viewBox="0 0 909 881"><path d="M41.5 574.5 V420.5 H909" fill="none" stroke="#707070"/><path d="M43.5 445.5 H59.5 L80.5 424.5 H128.5 V445.5Z" fill="#3a3a3d"/><path d="M128.5 445.5 V426.5 L130.5 424.5 H194.5 L196.5 426.5 V445.5Z" fill="#29292c"/><path d="M196.5 445.5 V426.5 L198.5 424.5 H249.5 L251.5 426.5 V445.5Z" fill="#29292c"/><path d="M43.5 572.5 V445.5 H59.5 L80.5 424.5 H126.5 L128.5 426.5 V445.5 M128.5 445.5 V426.5 L130.5 424.5 H194.5 L196.5 426.5 V445.5 M196.5 426.5 L198.5 424.5 H249.5 L251.5 426.5 V445.5 H909" fill="none" stroke="#707070"/></svg>
<div class="t" style="left:91px;top:428.84px;font-size:12.0px;color:#16a6f5;letter-spacing:0.497px;">Main</div>
<div class="t" style="left:144px;top:428.84px;font-size:12.0px;color:#ececec;letter-spacing:0.191px;">Options</div>
<div class="t" style="left:212px;top:428.84px;font-size:12.0px;color:#ececec;letter-spacing:-0.337px;">Dates</div>
<div class="t" style="left:52.5px;top:455.84px;font-size:12.0px;color:#ececec;letter-spacing:-0.169px;">File name:</div>
<div class="t" style="left:52.5px;top:481.84px;font-size:12.0px;color:#ececec;letter-spacing:-0.092px;">Containing text:</div>
<div class="t" style="left:52.5px;top:508.84px;font-size:12.0px;color:#ececec;letter-spacing:-0.004px;">Look in:</div>
<div class="a" style="left:151px;top:452px;width:699px;height:23px;background:#262628;border:2px solid #6c6c6c;"></div>
<div class="a" style="left:831px;top:454px;width:17px;height:19px;background:#2b2b2d;"></div>
<svg class="a" style="left:836px;top:462px;" width="6" height="4" viewBox="0 0 6 4"><path d="M0 0 H6 L3 3.5Z" fill="#e8e8e8"/></svg>
<div class="t" style="left:157px;top:456.84px;font-size:12.0px;color:#ececec;">*.js</div>
<div class="a" style="left:151px;top:478px;width:699px;height:23px;background:#262628;border:2px solid #6c6c6c;"></div>
<div class="a" style="left:831px;top:480px;width:17px;height:19px;background:#2b2b2d;"></div>
<svg class="a" style="left:836px;top:488px;" width="6" height="4" viewBox="0 0 6 4"><path d="M0 0 H6 L3 3.5Z" fill="#e8e8e8"/></svg>
<div class="t" style="left:861px;top:454.3px;font-family:'Liberation Serif',serif;font-size:15px;color:#8c8c8c;letter-spacing:-0.6px">Aa</div>
<svg class="a" style="left:889px;top:453px;" width="14" height="16" viewBox="0 0 14 16"><path d="M3 5.2 Q3 1.6 7 1.6 Q11 1.6 11 5 Q11 7.2 8.6 8.4 Q7.2 9.2 7.2 11" fill="none" stroke="#2f72e6" stroke-width="2.3"/><circle cx="7.2" cy="14" r="1.3" fill="#2a60d0"/></svg>
<div class="t" style="left:861px;top:480.3px;font-family:'Liberation Serif',serif;font-size:15px;color:#8c8c8c;letter-spacing:-0.6px">Aa</div>
<svg class="a" style="left:889px;top:479px;" width="14" height="16" viewBox="0 0 14 16"><path d="M3 5.2 Q3 1.6 7 1.6 Q11 1.6 11 5 Q11 7.2 8.6 8.4 Q7.2 9.2 7.2 11" fill="none" stroke="#2f72e6" stroke-width="2.3"/><circle cx="7.2" cy="14" r="1.3" fill="#2a60d0"/></svg>
<div class="a" style="left:151px;top:506px;width:609px;height:23px;background:#262628;border:2px solid #6c6c6c;"></div>
<div class="a" style="left:741px;top:508px;width:17px;height:19px;background:#2b2b2d;"></div>
<svg class="a" style="left:746px;top:516px;" width="6" height="4" viewBox="0 0 6 4"><path d="M0 0 H6 L3 3.5Z" fill="#e8e8e8"/></svg>
<div class="t" style="left:157px;top:510.84px;font-size:12.0px;color:#ececec;letter-spacing:0.226px;">E:\Dev\open-source-umbraco-cloud\</div>
<div class="a" style="left:767px;top:511px;width:12px;height:12px;background:#262628;border:1px solid #c0c0c0;"></div>
<svg class="a" style="left:768px;top:512px;" width="10" height="10" viewBox="0 0 10 10"><path d="M1.5 5 L4 7.8 L8.8 1.8" fill="none" stroke="#f0f0f0" stroke-width="1.4"/></svg>
<div class="t" style="left:781px;top:509.84px;font-size:12.0px;color:#ececec;letter-spacing:-0.041px;">Subfolders</div>
<svg class="a" style="left:0px;top:0px;left:0;top:0" width="909" height="881" viewBox="0 0 909 881"><path d="M861.5 514.525 V508.5 H866.775 L868.425 509.6 H875.025 V514.525Z" fill="#e4efff" stroke="#b8c8e0" stroke-width="0.6"/><path d="M862.65 513.51 H877.2 L875.52 522.0 H861.3Z" fill="#f6d574" stroke="#a87a10" stroke-width="1.0"/><path d="M863.97 515.25 H875.19 L874.2 520.9 H862.6Z" fill="none" stroke="#fff6c8" stroke-width="0.7"/><path d="M894.5 512.825 V509.5 H897.675 L898.725 510.6 H902.925 V512.825Z" fill="#e4efff" stroke="#b8c8e0" stroke-width="0.6"/><path d="M895.05 512.23 H904.2 L903.24 517.0 H894.3Z" fill="#f6d574" stroke="#a87a10" stroke-width="0.8"/><path d="M895.89 513.25 H903.03 L902.4 515.9 H895.6Z" fill="none" stroke="#fff6c8" stroke-width="0.7"/><path d="M889.0 517.55 V514.0 H892.175 L893.225 515.1 H897.425 V517.55Z" fill="#e4efff" stroke="#b8c8e0" stroke-width="0.6"/><path d="M889.55 516.92 H898.7 L897.74 522.0 H888.8Z" fill="#f6d574" stroke="#a87a10" stroke-width="0.8"/><path d="M890.39 518.0 H897.53 L896.9 520.9 H890.1Z" fill="none" stroke="#fff6c8" stroke-width="0.7"/></svg>
<div class="a" style="left:52px;top:533px;width:89px;height:23px;background:#262628;border:2px solid #6c6c6c;"></div>
<div class="a" style="left:122px;top:535px;width:17px;height:19px;background:#2b2b2d;"></div>
<svg class="a" style="left:127px;top:543px;" width="6" height="4" viewBox="0 0 6 4"><path d="M0 0 H6 L3 3.5Z" fill="#e8e8e8"/></svg>
<div class="t" style="left:57px;top:538.84px;font-size:12.0px;color:#ececec;letter-spacing:-0.235px;">Size (byte)</div>
<div class="a" style="left:151px;top:533px;width:23px;height:23px;background:#262628;border:1px solid #6a6a6a;"></div>
<div class="t" style="left:158px;top:539.11px;font-size:10.5px;color:#ececec;">&gt;</div>
<div class="a" style="left:177px;top:533px;width:61px;height:23px;background:#38383b;border:1px solid #6a6a6a;"></div>
<div class="t" style="left:182.5px;top:538.84px;font-size:12.0px;color:#6e6e70;">0</div>
<div class="a" style="left:242px;top:533px;width:23px;height:23px;background:#262628;border:1px solid #6a6a6a;"></div>
<div class="t" style="left:249px;top:539.11px;font-size:10.5px;color:#ececec;">&lt;</div>
<div class="a" style="left:268px;top:533px;width:61px;height:23px;background:#38383b;border:1px solid #6a6a6a;"></div>
<div class="t" style="left:273.5px;top:538.84px;font-size:12.0px;color:#6e6e70;">1</div>
<div class="t" style="left:339px;top:537.84px;font-size:12.0px;color:#ececec;letter-spacing:0.289px;">Modified:</div>
<div class="a" style="left:397px;top:533px;width:39px;height:23px;background:#262628;border:1px solid #6a6a6a;"></div>
<div class="t" style="left:402px;top:538.84px;font-size:12.0px;color:#ececec;letter-spacing:0.065px;">After:</div>
<div class="a" style="left:439px;top:533px;width:181px;height:23px;background:#38383b;border:1px solid #6a6a6a;"></div>
<div class="t" style="left:446px;top:538.84px;font-size:12.0px;color:#6e6e70;">Today</div>
<svg class="a" style="left:626px;top:536px;" width="16" height="16" viewBox="0 0 16 16"><defs><linearGradient id="cg" x1="0" y1="0" x2="0" y2="1"><stop offset="0" stop-color="#a9c6f8"/><stop offset="1" stop-color="#4f6fcf"/></linearGradient></defs><rect x="0.5" y="1" width="15" height="14.6" fill="#f6f6f6" stroke="#7d7f88" stroke-width="0.6"/><rect x="0.5" y="1" width="15" height="4.2" fill="url(#cg)"/><rect x="3.3" y="0" width="1" height="2.8" fill="#555"/><rect x="11.8" y="0" width="1" height="2.8" fill="#555"/><rect x="6.5" y="6.5" width="3.2" height="3.2" fill="#fafafa" stroke="#8a8a8a" stroke-width="0.9"/><rect x="9.7" y="9.7" width="3.2" height="3.2" fill="#fafafa" stroke="#8a8a8a" stroke-width="0.9"/><rect x="3.3" y="9.7" width="3.2" height="3.2" fill="#d6f2ff" stroke="#1b62c6" stroke-width="1.1"/><rect x="6.5" y="9.7" width="3.2" height="3.2" fill="#d6f2ff" stroke="#1b62c6" stroke-width="1.1"/><rect x="9.7" y="6.5" width="3.2" height="3.2" fill="#d6f2ff" stroke="#1b62c6" stroke-width="1.1"/></svg>
<div class="a" style="left:654px;top:533px;width:45px;height:23px;background:#262628;border:1px solid #6a6a6a;"></div>
<div class="t" style="left:658px;top:538.84px;font-size:12.0px;color:#ececec;letter-spacing:-0.115px;">Before:</div>
<div class="a" style="left:702px;top:533px;width:181px;height:23px;background:#38383b;border:1px solid #6a6a6a;"></div>
<div class="t" style="left:709px;top:538.84px;font-size:12.0px;color:#6e6e70;">Today</div>
<svg class="a" style="left:888px;top:536px;" width="16" height="16" viewBox="0 0 16 16"><defs><linearGradient id="cg" x1="0" y1="0" x2="0" y2="1"><stop offset="0" stop-color="#a9c6f8"/><stop offset="1" stop-color="#4f6fcf"/></linearGradient></defs><rect x="0.5" y="1" width="15" height="14.6" fill="#f6f6f6" stroke="#7d7f88" stroke-width="0.6"/><rect x="0.5" y="1" width="15" height="4.2" fill="url(#cg)"/><rect x="3.3" y="0" width="1" height="2.8" fill="#555"/><rect x="11.8" y="0" width="1" height="2.8" fill="#555"/><rect x="6.5" y="6.5" width="3.2" height="3.2" fill="#fafafa" stroke="#8a8a8a" stroke-width="0.9"/><rect x="9.7" y="9.7" width="3.2" height="3.2" fill="#fafafa" stroke="#8a8a8a" stroke-width="0.9"/><rect x="3.3" y="9.7" width="3.2" height="3.2" fill="#d6f2ff" stroke="#1b62c6" stroke-width="1.1"/><rect x="6.5" y="9.7" width="3.2" height="3.2" fill="#d6f2ff" stroke="#1b62c6" stroke-width="1.1"/><rect x="9.7" y="6.5" width="3.2" height="3.2" fill="#d6f2ff" stroke="#1b62c6" stroke-width="1.1"/></svg>
<div class="a" style="left:43px;top:572px;width:866px;height:1px;background:#707070;"></div>
<div class="a" style="left:41px;top:574px;width:868px;height:1px;background:#707070;"></div>
<div class="a" style="left:41px;top:575px;width:868px;height:3px;background:#2b2b2d;"></div>
<div class="a" style="left:42px;top:579px;width:505px;height:302px;background:#343437;"></div>
<div class="a" style="left:42px;top:609px;width:504px;height:272px;background:#29292b;"></div>
<svg class="a" style="left:0px;top:0px;left:0;top:0" width="909" height="881" viewBox="0 0 909 881"><path d="M41.5 881 V578.5 H547.5 V881" fill="none" stroke="#707070"/><path d="M43 580.5 H546" stroke="#707070"/><path d="M43 608.5 H546" stroke="#707070"/><path d="M291.5 581 V608" stroke="#707070"/><path d="M551.5 881 V578.5 H909" fill="none" stroke="#707070"/></svg>
<div class="t" style="left:51.5px;top:589.84px;font-size:12.0px;color:#ececec;letter-spacing:-0.003px;">Name</div>
<div class="t" style="left:297px;top:589.84px;font-size:12.0px;color:#ececec;letter-spacing:0.662px;">Location</div>
<div class="a" style="left:43px;top:610px;width:503px;height:21px;background:#0a77d5;"></div>
<div class="a" style="left:46px;top:610px;width:500px;height:1px;background:#e87f2a;"></div>
<div class="a" style="left:46px;top:629px;width:500px;height:1px;background:#e87f2a;"></div>
<div class="a" style="left:43px;top:610px;width:3px;height:20px;background:#1b1b1b;border-left:1px solid #e8e8e8;border-top:1px solid #e8e8e8;border-bottom:1px solid #e8e8e8;"></div>
<svg class="a" style="left:50px;top:613px;" width="10" height="14" viewBox="0 0 10 14"><path d="M0.5 0.5 H7 L9.5 3 V13.5 H0.5Z" fill="#fbfbfb" stroke="#d8c8b8" stroke-width="0.8"/><text x="1.2" y="10.5" font-family="Liberation Sans" font-weight="700" font-size="6.5" fill="#a9ab2a">JS</text></svg>
<div class="t" style="left:69px;top:614.84px;font-size:12.0px;color:#ffffff;letter-spacing:0.607px;">generate-openapi.js</div>
<div class="a" style="left:296px;top:612px;width:250px;height:18px;overflow:hidden"><div class="t" style="left:0px;top:2.84px;font-size:12.0px;color:#ffffff;letter-spacing:0.67px;">E:\Dev\open-source-umbraco-cloud\src\OpenSourceTest.MyExtension\wwwroot</div>
</div>
<div class="a" style="left:552px;top:579px;width:357px;height:23px;background:#2d2d30;"></div>
<div class="a" style="left:552px;top:603px;width:357px;height:278px;background:#29292b;"></div>
<div class="a" style="left:552px;top:603px;width:3px;height:278px;background:#333336;"></div>
<svg class="a" style="left:0px;top:0px;left:0;top:0" width="909" height="881" viewBox="0 0 909 881"><path d="M553 584.5 H566.5 V598.5 H553" fill="#2a2a2c" stroke="#707070"/><path d="M562.5 587.5 V596 L557.5 591.8Z" fill="none" stroke="#707070"/><path d="M553.5 602.5 H569.5 L588.5 582.5 H659.5 L661.5 584.5 V602.5Z" fill="#3a3a3d"/><path d="M661.5 602.5 V584.5 L663.5 582.5 H706 L708 584.5 V602.5Z" fill="#29292c"/><path d="M708 602.5 V584.5 L710 582.5 H772.5 L774.5 584.5 V602.5Z" fill="#29292c"/><path d="M553.5 881 V602.5 H569.5 L588.5 582.5 H659.5 L661.5 584.5 V602.5 M661.5 602.5 V584.5 L663.5 582.5 H706 L708 584.5 V602.5 M708 584.5 L710 582.5 H772.5 L774.5 584.5 V602.5 H909" fill="none" stroke="#707070"/></svg>
<div class="t" style="left:600px;top:585.84px;font-size:12.0px;color:#16a6f5;letter-spacing:-0.057px;">Summary</div>
<div class="t" style="left:677px;top:585.84px;font-size:12.0px;color:#ececec;letter-spacing:0.445px;">Hits</div>
<div class="t" style="left:724px;top:585.84px;font-size:12.0px;color:#ececec;letter-spacing:-0.170px;">Reports</div>
<div class="t" style="left:558px;top:610.15px;font-size:14.0px;color:#ffffff;font-weight:700;letter-spacing:0.073px;">Search Statistics</div>
<div class="a" style="left:558px;top:624px;width:113px;height:1px;background:#f0f0f0;"></div>
<div class="t" style="left:558.6px;top:657.30px;font-size:15.0px;color:#ececec;letter-spacing:-0.260px;">Found:</div>
<div class="t" style="left:646.5px;top:657.30px;font-size:15.0px;color:#ececec;letter-spacing:-0.238px;">1 item (2.27 KB)</div>
<div class="t" style="left:558.6px;top:682.30px;font-size:15.0px;color:#ececec;letter-spacing:-0.553px;">Checked:</div>
<div class="t" style="left:646.5px;top:682.30px;font-size:15.0px;color:#ececec;letter-spacing:-0.307px;">3.139 items (672.35 MB)</div>
<div class="t" style="left:558.6px;top:707.30px;font-size:15.0px;color:#ececec;letter-spacing:-0.449px;">Status:</div>
<div class="t" style="left:646.5px;top:707.30px;font-size:15.0px;color:#ececec;letter-spacing:-0.026px;">Completed (&lt; 1 sec)</div>
<div class="t" style="left:558.6px;top:732.30px;font-size:15.0px;color:#ececec;letter-spacing:0.121px;">Completed:</div>
<div class="t" style="left:646.5px;top:732.30px;font-size:15.0px;color:#ececec;letter-spacing:-0.420px;">19 Sept 2025 10.51.51</div>
<svg class="a" style="left:562px;top:781px;" width="16" height="16" viewBox="0 0 16 16"><defs><radialGradient id="ig" cx="0.35" cy="0.3" r="0.8"><stop offset="0" stop-color="#e8efff"/><stop offset="1" stop-color="#6f8fd8"/></radialGradient></defs><circle cx="8" cy="8" r="7.4" fill="url(#ig)" stroke="#4a68b8" stroke-width="0.8"/><rect x="7" y="6.5" width="2.2" height="6" fill="#fff"/><circle cx="8.1" cy="4.3" r="1.2" fill="#fff"/></svg>
<div class="t" style="left:584.5px;top:782.58px;font-size:14.67px;color:#ffffff;font-weight:700;letter-spacing:0.028px;">Search criteria excluded 3.138 items from list</div>
<div class="t" style="left:588px;top:812.30px;font-size:15.0px;color:#ececec;letter-spacing:-0.288px;">Search Criteria</div>
<div class="a" style="left:588px;top:827px;width:96px;height:1px;background:#e0e0e0;"></div>
<div class="t" style="left:746.5px;top:812.30px;font-size:15.0px;color:#ececec;letter-spacing:-0.350px;">Excluded Files</div>
<div class="a" style="left:746px;top:827px;width:93px;height:1px;background:#e0e0e0;"></div>
<div class="t" style="left:588px;top:838.30px;font-size:15.0px;color:#ececec;letter-spacing:-0.157px;">File name</div>
<div class="t" style="left:746.5px;top:838.30px;font-size:15.0px;color:#ececec;letter-spacing:-0.559px;">3.138</div>
<svg class="a" style="left:156px;top:763px;" width="24" height="32" viewBox="0 0 24 32"><path d="M1.6 1.8 V27.8 L7.2 21.6 L10.6 29 L15.2 27 L11.8 20.2 H19.6Z" fill="#ff08c8" stroke="#000" stroke-width="2" stroke-linejoin="miter" stroke-miterlimit="6"/></svg>
<div class="a" style="left:20px;top:318px;width:13px;height:60px;overflow:hidden"><div class="a" style="left:4px;top:2px;width:14px;height:16px;background:#000;border:1.5px solid #e0206a;"></div>
<div class="t" style="left:7px;top:5px;font-size:8.5px;color:#d8d8d8;font-weight:700">RE</div><div class="a" style="left:7px;top:14px;width:7px;height:1px;background:#e8e8e8;"></div>
<div class="a" style="left:7px;top:22px;width:10px;height:14px;background:#e8eaec;"></div>
<svg class="a" style="left:8.5px;top:25px;" width="8" height="8" viewBox="0 0 8 8"><path d="M4 0 L5 2.5 L8 2.5 L6 4.5 L7 8 L4 6 L1 8 L2 4.5 L0 2.5 L3 2.5Z" fill="#3a86c4"/></svg>
<div class="a" style="left:7px;top:41px;width:10px;height:14px;background:#e8eaec;"></div>
<svg class="a" style="left:8.5px;top:44px;" width="8" height="8" viewBox="0 0 8 8"><path d="M4 0 L5 2.5 L8 2.5 L6 4.5 L7 8 L4 6 L1 8 L2 4.5 L0 2.5 L3 2.5Z" fill="#3a86c4"/></svg>
</div>
</body></html>
